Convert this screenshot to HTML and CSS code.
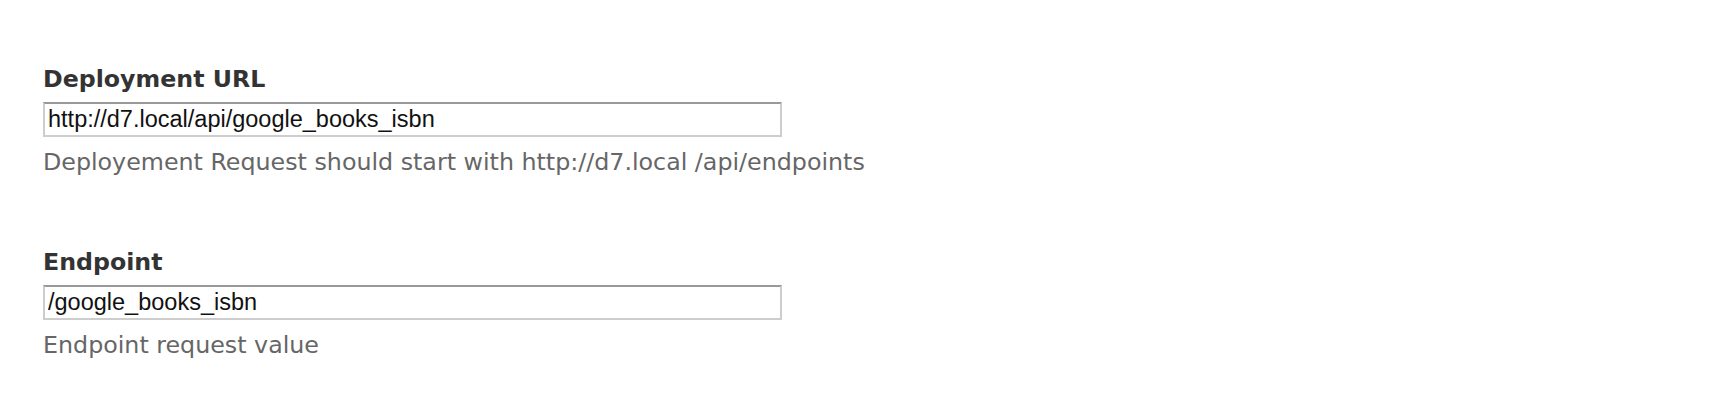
FILE: index.html
```html
<!DOCTYPE html>
<html lang="en">
<head>
<meta charset="utf-8">
<title>Endpoint settings</title>
<link rel="stylesheet" href="styles.css">
</head>
<body>
<form class="settings-form">
  <div class="form-item">
    <label class="form-label" for="deploy-url">Deployment URL</label>
    <input class="form-text" id="deploy-url" type="text" value="http://d7.local/api/google_books_isbn">
    <div class="description">Deployement Request should start with http://d7.local /api/endpoints</div>
  </div>
  <div class="form-item">
    <label class="form-label" for="endpoint">Endpoint</label>
    <input class="form-text" id="endpoint" type="text" value="/google_books_isbn">
    <div class="description">Endpoint request value</div>
  </div>
</form>
</body>
</html>
```
FILE: styles.css
```css
html, body {
  margin: 0;
  padding: 0;
  background: #fff;
}

body {
  font-family: "DejaVu Sans", "Noto Sans", sans-serif;
}

.settings-form {
  display: flex;
  flex-direction: column;
  gap: 70px;
  padding: 64px 0 0 43px;
}

.form-item {
  display: flex;
  flex-direction: column;
  align-items: flex-start;
}

.form-label {
  font-size: 23.7px;
  line-height: 30px;
  font-weight: bold;
  color: #333;
  margin-bottom: 8px;
}

.form-text {
  box-sizing: border-box;
  width: 739px;
  height: 35px;
  margin: 0;
  padding: 0 3px;
  border: 2px solid #cdcdcd;
  border-top-color: #999;
  border-radius: 0;
  background: #fff;
  font-family: "Liberation Sans", Arial, sans-serif;
  font-size: 23.5px;
  color: #111;
  outline: none;
}

.description {
  margin-top: 10px;
  font-size: 23.75px;
  line-height: 30px;
  color: #666;
}
```
